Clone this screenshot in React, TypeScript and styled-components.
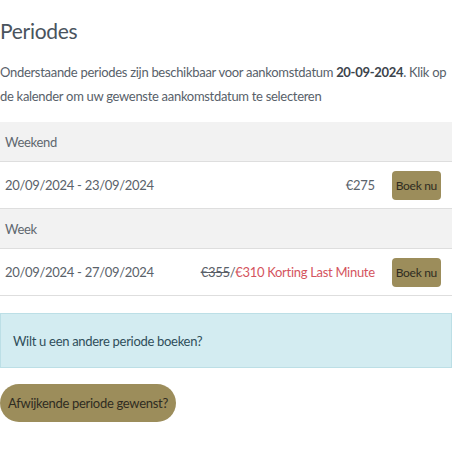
import React from "react";
import styled, { createGlobalStyle } from "styled-components";

const GlobalStyle = createGlobalStyle`
  html, body {
    margin: 0;
    padding: 0;
    background: #ffffff;
  }
  body {
    font-family: Lato, "Liberation Sans", sans-serif;
    letter-spacing: -0.3px;
    color: #58616a;
  }
`;

const Page = styled.div`
  width: 452px;
  padding-top: 18px;
`;

const Title = styled.h2`
  margin: 0 0 16px;
  font-size: 21px;
  font-weight: 400;
  line-height: 26px;
  color: #4a545e;
`;

const Intro = styled.p`
  margin: 0 0 14px;
  font-size: 13px;
  line-height: 24px;
  color: #58616a;

  strong {
    font-weight: 700;
    color: #3c444c;
  }
`;

const Table = styled.div`
  display: flex;
  flex-direction: column;
  border-bottom: 1px solid #dedede;
`;

const GroupHeader = styled.div`
  display: flex;
  align-items: center;
  height: 39px;
  padding: 0 5px;
  background: #f2f2f2;
  border-bottom: 1px solid #dedede;
  font-size: 13px;
  color: #60676e;
`;

const Row = styled.div<{ $last?: boolean }>`
  display: flex;
  align-items: center;
  height: 46px;
  padding: 0 11px 0 5px;
  border-bottom: ${(p) => (p.$last ? "none" : "1px solid #dedede")};
  font-size: 13px;
  color: #5a626a;
`;

const Dates = styled.span`
  flex: 1;
`;

const Price = styled.span`
  margin-right: 17px;
  color: #5a626a;

  s {
    color: #5a6068;
  }
`;

const Discount = styled.span`
  color: #d4545e;
`;

const BookButton = styled.button`
  height: 29px;
  padding: 0 4px;
  border: none;
  border-radius: 4px;
  background: #9c8d5b;
  color: #2f2c22;
  font-family: inherit;
  letter-spacing: -0.3px;
  font-size: 12px;
`;

const InfoBox = styled.div`
  margin-top: 17px;
  padding: 0 12px;
  height: 53px;
  display: flex;
  align-items: center;
  background: #d3ecf1;
  border: 1px solid #bcdfe6;
  font-size: 13px;
  color: #2f4e5a;
`;

const AltButton = styled.button`
  display: block;
  margin-top: 16px;
  height: 38px;
  padding: 0 8px;
  border: none;
  border-radius: 19px;
  background: #9c8d5b;
  color: #2f2c22;
  font-family: inherit;
  letter-spacing: -0.3px;
  font-size: 13px;
`;

type Period = {
  name: string;
  dates: string;
  price: string;
  oldPrice?: string;
  note?: string;
};

const periods: Period[] = [
  { name: "Weekend", dates: "20/09/2024 - 23/09/2024", price: "€275" },
  {
    name: "Week",
    dates: "20/09/2024 - 27/09/2024",
    oldPrice: "€355",
    price: "€310",
    note: "Korting Last Minute",
  },
];

export default function App() {
  return (
    <Page>
      <GlobalStyle />
      <Title>Periodes</Title>
      <Intro>
        Onderstaande periodes zijn beschikbaar voor aankomstdatum{" "}
        <strong>20-09-2024</strong>. Klik op de kalender om uw gewenste
        aankomstdatum te selecteren
      </Intro>
      <Table>
        {periods.map((p, i) => (
          <React.Fragment key={p.name}>
            <GroupHeader>{p.name}</GroupHeader>
            <Row $last={i === periods.length - 1}>
              <Dates>{p.dates}</Dates>
              {p.oldPrice ? (
                <Price>
                  <s>{p.oldPrice}</s>/
                  <Discount>
                    {p.price} {p.note}
                  </Discount>
                </Price>
              ) : (
                <Price>{p.price}</Price>
              )}
              <BookButton>Boek nu</BookButton>
            </Row>
          </React.Fragment>
        ))}
      </Table>
      <InfoBox>Wilt u een andere periode boeken?</InfoBox>
      <AltButton>Afwijkende periode gewenst?</AltButton>
    </Page>
  );
}
